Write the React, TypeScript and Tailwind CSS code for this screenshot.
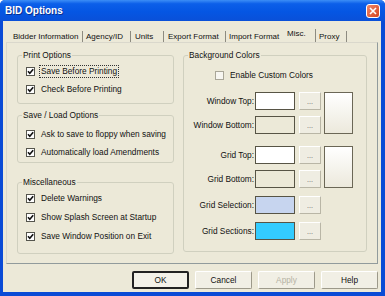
import React from "react";

const font = { fontFamily: '"Liberation Sans", Arial, sans-serif' };

function Check({ checked = true, light = false }: { checked?: boolean; light?: boolean }) {
  return (
    <span
      className={
        light
          ? "flex h-[9px] w-[9px] shrink-0 items-center justify-center border border-[#A9A698] bg-[#F7F6F1]"
          : "flex h-[9px] w-[9px] shrink-0 items-center justify-center border border-[#55554d] bg-white"
      }
    >
      {checked && (
        <svg viewBox="0 0 7 7" className="h-[7px] w-[7px]">
          <path d="M1 3.2 L2.8 5.2 L6.2 1.2" stroke="#111" strokeWidth="1.6" fill="none" />
        </svg>
      )}
    </span>
  );
}

function CheckRow({ label, h, focus = false }: { label: string; h: string; focus?: boolean }) {
  return (
    <div className={`flex items-center gap-[4px] pl-[8px] ${h}`}>
      <Check />
      <span
        className={
          focus
            ? "whitespace-nowrap border border-dotted border-[#333] px-[1px] leading-[11px]"
            : "whitespace-nowrap border border-transparent px-[1px] leading-[11px]"
        }
      >
        {label}
      </span>
    </div>
  );
}

function Group({
  title,
  className,
  children,
}: {
  title: string;
  className: string;
  children: React.ReactNode;
}) {
  return (
    <fieldset className={`rounded-[3px] border border-[#D0D0BF] ${className}`}>
      <legend className="ml-[4px] px-[1px] leading-[10px]">{title}</legend>
      {children}
    </fieldset>
  );
}

function DotsButton() {
  return (
    <div className="flex h-[18px] w-[22px] items-center justify-center border border-t-white border-l-white border-r-[#B9B6A6] border-b-[#B9B6A6] bg-[#EFEDE2] text-[7px] leading-none text-[#555]">
      ...
    </div>
  );
}

function ColorRow({ label, color }: { label: string; color: string }) {
  return (
    <div className="flex h-[18px] items-center">
      <span className="w-[71px] whitespace-nowrap pr-[1px] text-right">{label}</span>
      <div className="h-[18px] w-[40px] border border-[#575445]" style={{ backgroundColor: color }} />
      <div className="ml-[4px]">
        <DotsButton />
      </div>
    </div>
  );
}

function Preview() {
  return (
    <div className="ml-[3px] h-[42px] w-[29px] border border-[#6B6756] bg-[linear-gradient(to_bottom,#ffffff,#ECE9DC)]" />
  );
}

const tabs = [
  { label: "Bidder Information", w: "w-[76px]", pl: "pl-[6px]", border: true },
  { label: "Agency/ID", w: "w-[48px]", pl: "pl-[3px]", border: true },
  { label: "Units", w: "w-[33px]", pl: "pl-[4px]", border: true },
  { label: "Export Format", w: "w-[62px]", pl: "pl-[4px]", border: true },
  { label: "Import Format", w: "w-[56px]", pl: "pl-[3px]", border: false },
];

export default function App() {
  return (
    <div
      className="flex h-[296px] w-[385px] flex-col overflow-hidden rounded-t-[5px] bg-[#0A4BD6] text-[8.3px] text-[#111]"
      style={font}
    >
      {/* title bar */}
      <div className="flex h-[21px] shrink-0 items-center justify-between bg-[linear-gradient(to_bottom,#3C8EF6_0%,#0C5FE9_18%,#0556E3_55%,#0A50D8_100%)] pl-[5px] pr-[5px]">
        <span className="text-[10px] font-bold leading-none text-white [text-shadow:1px_1px_0_#0a2f8f]">
          BID Options
        </span>
        <div className="mt-[1px] flex h-[14px] w-[14px] items-center justify-center rounded-[3px] border border-white bg-[linear-gradient(135deg,#F0876A,#D5451E)]">
          <svg viewBox="0 0 8 8" className="h-[8px] w-[8px]">
            <path d="M1 1 L7 7 M7 1 L1 7" stroke="#fff" strokeWidth="1.6" />
          </svg>
        </div>
      </div>

      {/* body */}
      <div className="ml-[3px] mr-[4px] mb-[4px] flex flex-1 flex-col bg-[#ECE9D8]">
        {/* tabs */}
        <div className="mt-[8px] flex h-[13px] items-end pl-[4px] text-[8px]">
          {tabs.map((t) => (
            <div
              key={t.label}
              className={`${t.w} ${t.pl} flex h-[11px] items-center whitespace-nowrap leading-none ${
                t.border ? "border-r border-[#8D8B80]" : ""
              }`}
            >
              {t.label}
            </div>
          ))}
          <div className="flex h-[13px] w-[34px] items-start whitespace-nowrap border-r border-[#8D8B80] pl-[5px] pt-[1px] leading-none">
            Misc.
          </div>
          <div className="flex h-[11px] w-[31px] items-center whitespace-nowrap border-r border-[#8D8B80] pl-[3px] leading-none">
            Proxy
          </div>
        </div>

        {/* panel */}
        <div className="mx-[3px] flex h-[222px] gap-[9px] border border-[#919B9C] border-t-[#DAD8CC] border-l-[#DAD8CC] px-[10px] pt-[7px]">
          <div className="flex w-[157px] flex-col">
            <Group title="Print Options" className="h-[54px]">
              <div className="mt-[2px]">
                <CheckRow label="Save Before Printing" h="h-[18px]" focus />
                <CheckRow label="Check Before Printing" h="h-[18px]" />
              </div>
            </Group>
            <Group title="Save / Load Options" className="mt-[6px] h-[53px]">
              <div className="mt-[5px]">
                <CheckRow label="Ask to save to floppy when saving" h="h-[18px]" />
                <CheckRow label="Automatically load Amendments" h="h-[18px]" />
              </div>
            </Group>
            <Group title="Miscellaneous" className="mt-[14px] h-[77px]">
              <div className="mt-[2px]">
                <CheckRow label="Delete Warnings" h="h-[19px]" />
                <CheckRow label="Show Splash Screen at Startup" h="h-[19px]" />
                <CheckRow label="Save Window Position on Exit" h="h-[19px]" />
              </div>
            </Group>
          </div>

          <Group title="Background Colors" className="h-[202px] w-[184px]">
            <div className="mt-[6px] flex h-[18px] items-center gap-[6px] pl-[31px]">
              <Check checked={false} light />
              <span className="whitespace-nowrap">Enable Custom Colors</span>
            </div>

            <div className="mt-[8px] flex items-start">
              <div className="flex flex-col gap-[6px]">
                <ColorRow label="Window Top:" color="#FFFFFF" />
                <ColorRow label="Window Bottom:" color="#ECE9D8" />
              </div>
              <Preview />
            </div>

            <div className="mt-[12px] flex items-start">
              <div className="flex flex-col gap-[6px]">
                <ColorRow label="Grid Top:" color="#FFFFFF" />
                <ColorRow label="Grid Bottom:" color="#ECE9D8" />
              </div>
              <Preview />
            </div>

            <div className="mt-[8px] flex flex-col gap-[8px]">
              <ColorRow label="Grid Selection:" color="#C7D5EF" />
              <ColorRow label="Grid Sections:" color="#33CCFF" />
            </div>
          </Group>
        </div>

        {/* buttons */}
        <div className="mt-[7px] flex justify-end gap-[6px] pr-[3px]">
          <button className="h-[18px] w-[57px] rounded-[2px] border-2 border-[#222] bg-[#F3F1E8] leading-none">
            OK
          </button>
          <button className="h-[18px] w-[57px] rounded-[2px] border border-t-white border-l-white border-r-[#9C998A] border-b-[#9C998A] bg-[#F1EFE5] leading-none">
            Cancel
          </button>
          <button className="h-[18px] w-[57px] rounded-[2px] border border-t-white border-l-white border-r-[#9C998A] border-b-[#9C998A] bg-[#F1EFE5] leading-none text-[#B5B2A4]">
            Apply
          </button>
          <button className="h-[18px] w-[57px] rounded-[2px] border border-t-white border-l-white border-r-[#9C998A] border-b-[#9C998A] bg-[#F1EFE5] leading-none">
            Help
          </button>
        </div>
      </div>
    </div>
  );
}
